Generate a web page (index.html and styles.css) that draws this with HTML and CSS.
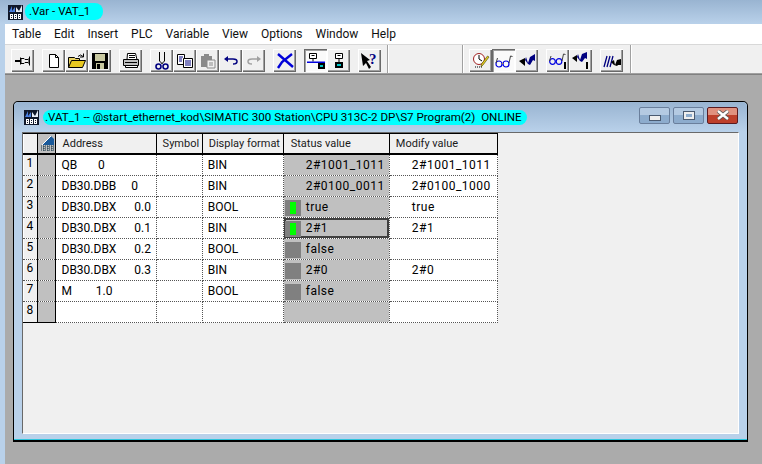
FILE: index.html
```html
<!DOCTYPE html>
<html lang="en">
<head>
    <meta charset="UTF-8" />
    <title>Var - VAT_1</title>
    <link rel="stylesheet" href="styles.css">
</head>
<body>

<svg class="defs" width="0" height="0">
    <symbol id="app-icon" viewBox="0 0 15 15">
        <rect width="15" height="15" fill="#10182a"/>
        <path d="M1 7 L4 1 L4 6 L7 2 L7 7 Z" fill="#4a80e0"/>
        <path d="M8 7 L8 2 L11 6 L14 0 L14 7 Z" fill="#e8eef8"/>
        <path d="M2 9h3v5H2zM6 9h3v5H6zM10 9h3v5h-3z" fill="#fff"/>
        <path d="M3 10h1v1H3zM3 12h1v1H3zM7 10h1v1H7zM7 12h1v1H7zM11 10h1v1h-1zM11 12h1v1h-1z" fill="#10182a"/>
    </symbol>
</svg>

<!-- title -->
<div class="app-title">
    <svg class="app-icon"><use href="#app-icon"/></svg>
    <span class="mark">.Var - VAT_1</span>
</div>

<div class="frame">
    <div class="menu">
        <span>Table</span><span>Edit</span><span>Insert</span><span>PLC</span><span>Variable</span><span>View</span><span>Options</span><span>Window</span><span>Help</span>
    </div>

    <!-- toolbar -->
    <div class="toolbar">
        <div class="tool-group">
            <button class="tool"><svg class="big" viewBox="0 0 18 18"><path d="M1 9h5" stroke="#000" stroke-width="2" fill="none"/><path d="M6.500 5.500v7" stroke="#000"/><path d="M7 6.500h3l1 1h3l1-1v5l-1-1h-3l-1 1H7z" fill="#f0f0f0" stroke="#000"/><path d="M15.500 4.500v9" stroke="#000"/></svg></button>
        </div>
        <div class="tool-group">
            <button class="tool"><svg viewBox="0 0 16 16"><path d="M3.500 1.500h6l3 3v10h-9z" fill="#fff" stroke="#000"/><path d="M9.500 1.500v3h3" fill="none" stroke="#000"/></svg></button>
            <button class="tool"><svg class="big" viewBox="0 0 18 18"><path d="M.5 15.500v-10h6l1 1h4v2" fill="#e8d060" stroke="#000"/><path d="M.5 15.500l3-7h14l-3 7z" fill="#e8c820" stroke="#000"/><path d="M10 4.500q2.500-3 5 0M15.500 1.500v3.500h-3.500" fill="none" stroke="#000"/></svg></button>
            <button class="tool"><svg viewBox="0 0 16 16"><path d="M0 0h16v16H0z" fill="#000"/><path d="M3 1h10v7H3z" fill="#c8c8a0"/><path d="M4 10h8v6H4z" fill="#c8c8a0"/><path d="M5 11h3v5H5z" fill="#000"/></svg></button>
        </div>
        <div class="tool-group">
            <button class="tool"><svg class="big" viewBox="0 0 18 18"><path d="M5.500 1.500h8l1.500 6h-10z" fill="#fff" stroke="#000"/><path d="M1.500 7.500h15v6h-15z" fill="#c0c0c0" stroke="#000"/><path d="M3.500 13.500h12v2h-12z" fill="#fff" stroke="#000"/><path d="M7 3.500h6M7 5.500h6M3 10.500h12" stroke="#000"/></svg></button>
        </div>
        <div class="tool-group">
            <button class="tool"><svg class="big" viewBox="0 0 18 18"><path d="M6.500 0v9l3 3M11.500 0v9l-3 3" fill="none" stroke="#000"/><circle cx="5.500" cy="14.500" r="2.500" fill="none" stroke="#000080" stroke-width="1.600"/><circle cx="12.500" cy="14.500" r="2.500" fill="none" stroke="#000080" stroke-width="1.600"/></svg></button>
            <button class="tool"><svg viewBox="0 0 16 16"><path d="M.5 1.500h7v10h-7z" fill="#fff" stroke="#000"/><path d="M6.500 5.500h9v9h-9z" fill="#fff" stroke="#000"/><path d="M2 4h4M2 6h3M2 8h3M8 8h6M8 10h6M8 12h6" stroke="#000080"/></svg></button>
            <button class="tool"><svg viewBox="0 0 16 16"><path d="M1 3h3V1h5v2h3v11H1z" fill="#8a8a8a"/><path d="M7 7h8v8H7z" fill="#f0f0f0" stroke="#8a8a8a"/><path d="M9 10h4M9 12h4" stroke="#8a8a8a"/></svg></button>
            <button class="tool"><svg viewBox="0 0 16 16"><path d="M1 6l4-3v6z" fill="#000080"/><path d="M4 6h6q4 0 4 2.500t-4 2.500" fill="none" stroke="#000080" stroke-width="1.500"/></svg></button>
            <button class="tool"><svg viewBox="0 0 16 16"><path d="M15 6l-4-3v6z" fill="#a0a0a0"/><path d="M12 6H6q-4 0-4 2.500t4 2.500" fill="none" stroke="#a0a0a0" stroke-width="1.500"/></svg></button>
        </div>
        <div class="tool-group">
            <button class="tool"><svg class="big" viewBox="0 0 18 18"><path d="M2 2l15 13M16 2L6 10l-4 6" fill="none" stroke="#0000d8" stroke-width="2.400"/></svg></button>
        </div>
        <div class="tool-group">
            <button class="tool pressed"><svg class="big" viewBox="0 0 18 18"><path d="M2.500 1.500h7v5h-7z" fill="#fff" stroke="#000"/><path d="M4.500 3.500h3" stroke="#000"/><path d="M6 6.500v3" stroke="#000"/><path d="M0 9.500h18v1.500H0z" fill="#0000e0"/><path d="M11 11h7v6h-7z" fill="#000"/><path d="M13 13h3v2h-3z" fill="#00c8c8"/></svg></button>
            <button class="tool"><svg viewBox="0 0 16 16"><path d="M4.500 .5h7v5h-7z" fill="#fff" stroke="#000"/><path d="M6.500 2.500h3" stroke="#000"/><path d="M8 5.500v4" stroke="#000"/><path d="M4 9h8v6H4z" fill="#000"/><path d="M6 11h4v2H6z" fill="#00c8c8"/></svg></button>
        </div>
        <div class="tool-group">
            <button class="tool"><svg class="big" viewBox="0 0 18 18"><path d="M0 1l9 7-3 1 4 6-2 2-3-6-3 3z" fill="#000"/><text class="tool-q" x="8" y="12">?</text></svg></button>
        </div>
        <div class="tool-sep first"></div>
        <div class="tool-sep second"></div>
        <div class="tool-group after-sep">
            <button class="tool"><svg class="big" viewBox="0 0 18 18"><circle cx="7" cy="7" r="5.500" fill="#fff" stroke="#a02020"/><path d="M7 3v4l3 2" fill="none" stroke="#000"/><path d="M3 15h7" stroke="#000" stroke-dasharray="1 1"/><path d="M17 5l-6 8-2 2 .5-3 6-8z" fill="#e8d020" stroke="#404000" stroke-width=".6"/></svg></button>
            <button class="tool pressed"><svg class="big" viewBox="0 0 18 18"><circle cx="4" cy="12" r="3" fill="none" stroke="#0000e0" stroke-width="1.200"/><circle cx="11" cy="12" r="3" fill="none" stroke="#0000e0" stroke-width="1.200"/><path d="M1 11l1.500-5M14 11l1.500-7 2 .5" fill="none" stroke="#404040"/><path d="M7 11.500h1" stroke="#d0a000"/></svg></button>
            <button class="tool"><svg class="big" viewBox="0 0 18 18"><path d="M1 9l6-3v8z" fill="#000"/><path d="M7 8l1-3 2 6 2-6 5-3v7l-2-1-3 5-2-1z" fill="#000080"/></svg></button>
        </div>
        <div class="tool-group">
            <button class="tool"><svg class="big" viewBox="0 0 18 18"><circle cx="3.500" cy="9.500" r="2.800" fill="none" stroke="#0000e0" stroke-width="1.200"/><circle cx="10" cy="9.500" r="2.800" fill="none" stroke="#0000e0" stroke-width="1.200"/><path d="M.5 9l1.500-5M13 9l1.500-7 2 .5" fill="none" stroke="#404040"/><path d="M15 10h2v7h-2z" fill="#000"/></svg></button>
            <button class="tool"><svg class="big" viewBox="0 0 18 18"><path d="M0 6l5-3v7z" fill="#000"/><path d="M5 5l1-3 2 6 2-6 5-2v7l-2-1-3 4-2-1z" fill="#000080"/><path d="M14 10h2v7h-2z" fill="#000"/></svg></button>
        </div>
        <div class="tool-group">
            <button class="tool"><svg class="big" viewBox="0 0 18 18"><path d="M4 4L1 15M7 4L4 15M10 4L7 15" stroke="#000080" stroke-width="1.300" fill="none"/><path d="M8 10l3-2 1 5 2-5 4-1v6h-3l-1 1-3-1z" fill="#000"/></svg></button>
        </div>
        <div class="tool-sep last"></div>
    </div>

    <!-- mdi -->
    <div class="mdi">
        <div class="child">
            <div class="child-title">
                <svg class="child-icon"><use href="#app-icon"/></svg>
                <span class="mark child-mark">.VAT_1 -- @start_ethernet_kod\SIMATIC 300 Station\CPU 313C-2 DP\S7 Program(2)  ONLINE</span>
                <div class="win-btns">
                    <div class="win-btn"><span class="glyph-min"></span></div>
                    <div class="win-btn"><span class="glyph-max"></span></div>
                    <div class="win-btn close"><svg viewBox="0 0 14 10" width="14" height="10"><path d="M2 1l10 8M12 1L2 9" stroke="#555" stroke-width="4"/><path d="M2 1l10 8M12 1L2 9" stroke="#fff" stroke-width="2.400"/></svg></div>
                </div>
            </div>
            <div class="client">
                <table class="vat">
                    <colgroup>
                        <col class="c-num"><col class="c-ico"><col class="c-addr"><col class="c-sym"><col class="c-fmt"><col class="c-status"><col class="c-mod">
                    </colgroup>
                    <thead>
                    <tr>
                        <th class="num"></th>
                        <th class="ico"><svg viewBox="0 0 16 17" width="16" height="17"><path d="M3 10L12 1l3 3v6z" fill="#1a5a9a"/><path d="M3 10l9-9" stroke="#fff"/><path d="M2 11h14M2 13h14M2 15h14M5 11v5M9 11v5M13 11v5" stroke="#103040" stroke-dasharray="1 1"/></svg></th>
                        <th class="addr">Address</th>
                        <th>Symbol</th>
                        <th>Display format</th>
                        <th class="status">Status value</th>
                        <th>Modify value</th>
                    </tr>
                    </thead>
                    <tbody>
                    <tr><td class="num">1</td><td class="ico"></td><td class="addr">QB       0</td><td></td><td>BIN</td><td class="status"><div class="val-row plain">2#1001_1011</div></td><td class="mod">2#1001_1011</td></tr>
                    <tr><td class="num">2</td><td class="ico"></td><td class="addr">DB30.DBB     0</td><td></td><td>BIN</td><td class="status"><div class="val-row plain">2#0100_0011</div></td><td class="mod">2#0100_1000</td></tr>
                    <tr><td class="num">3</td><td class="ico"></td><td class="addr">DB30.DBX      0.0</td><td></td><td>BOOL</td><td class="status"><div class="val-row"><span class="led on"></span>true</div></td><td class="mod">true</td></tr>
                    <tr><td class="num">4</td><td class="ico"></td><td class="addr">DB30.DBX      0.1</td><td></td><td>BIN</td><td class="status focus"><div class="val-row"><span class="led on"></span>2#1</div></td><td class="mod">2#1</td></tr>
                    <tr><td class="num">5</td><td class="ico"></td><td class="addr">DB30.DBX      0.2</td><td></td><td>BOOL</td><td class="status"><div class="val-row"><span class="led"></span>false</div></td><td class="mod"></td></tr>
                    <tr><td class="num">6</td><td class="ico"></td><td class="addr">DB30.DBX      0.3</td><td></td><td>BIN</td><td class="status"><div class="val-row"><span class="led"></span>2#0</div></td><td class="mod">2#0</td></tr>
                    <tr><td class="num">7</td><td class="ico"></td><td class="addr">M        1.0</td><td></td><td>BOOL</td><td class="status"><div class="val-row"><span class="led"></span>false</div></td><td class="mod"></td></tr>
                    <tr><td class="num">8</td><td class="ico"></td><td class="addr"></td><td></td><td></td><td class="status"></td><td class="mod"></td></tr>
                    </tbody>
                </table>
            </div>
        </div>
    </div>
</div>

</body>
</html>
```

FILE: styles.css
```css
html, body {
    height: 100%;
}

body {
    margin: 0;
    overflow: hidden;
    display: flex;
    flex-direction: column;
    font-family: Roboto, 'Liberation Sans', sans-serif;
    font-size: 12px;
    font-variant-ligatures: none;
    color: #000;
    background: #b9d1ea;
}

.defs {
    position: absolute;
}

.mark {
    background: #00ffff;
    border-radius: 8px;
    white-space: pre;
}

/* main window */
.app-title {
    height: 24px;
    flex: none;
    display: flex;
    align-items: center;
    padding-left: 8px;
    box-sizing: border-box;
    background: linear-gradient(#99b4d1, #b9d1ea);
}

.app-icon {
    width: 15px;
    height: 15px;
    margin-right: 2px;
}

.app-title .mark {
    padding: 0 13px 0 4px;
    line-height: 17px;
    margin-top: -1px;
    font-size: 11.5px;
}

.frame {
    flex: 1;
    min-height: 0;
    margin-left: 5px;
    display: flex;
    flex-direction: column;
}

.menu {
    height: 20px;
    flex: none;
    display: flex;
    align-items: center;
    padding-left: 7px;
    gap: 13px;
    background: #fff;
    color: #101010;
}

/* toolbar */
.toolbar {
    height: 30px;
    flex: none;
    box-sizing: border-box;
    display: flex;
    padding: 4px 0 0 6px;
    gap: 8px;
    background: #f0f0f0;
    border-top: 1px solid #d8d8d8;
    border-bottom: 1px solid #a0a0a0;
}

.tool-group {
    display: flex;
    height: 23px;
}

.tool {
    width: 23px;
    height: 23px;
    padding: 0;
    border: 0;
    display: flex;
    align-items: center;
    justify-content: center;
    background: #f0f0f0;
    box-shadow: inset 1px 1px 0 #fff, inset -1px -1px 0 #696969, inset -2px -2px 0 #a0a0a0;
}

.tool.pressed {
    background: #fafafa;
    box-shadow: inset 1px 1px 0 #696969, inset 2px 2px 0 #a0a0a0, inset -1px -1px 0 #fff;
}

.tool svg {
    width: 16px;
    height: 16px;
}

.tool svg.big {
    width: 18px;
    height: 18px;
}

.tool-q {
    font-family: 'Liberation Serif', serif;
    font-weight: bold;
    font-size: 15px;
    fill: #000080;
}

.tool-sep {
    width: 1px;
    height: 28px;
    margin-top: -4px;
    background: #a0a0a0;
    border-right: 1px solid #fff;
}

.tool-sep.first {
    margin-left: -2px;
}

.tool-sep.second {
    margin-left: 65px;
}

.tool-group.after-sep {
    margin-left: -3px;
}

.tool-sep.last {
    margin-left: -1px;
}

/* mdi area */
.mdi {
    flex: 1;
    min-height: 0;
    padding: 26px 14px 0 8px;
    background: #ababab;
    border-top: 1px solid #808080;
}

.child {
    height: 341px;
    box-sizing: border-box;
    display: flex;
    flex-direction: column;
    border: 1px solid #000;
    border-bottom-width: 2px;
    border-radius: 5px 5px 0 0;
    padding: 0 8px 6px;
    background: #b9d1ea;
    box-shadow: inset 0 -1px 0 #2ec4dc;
}

.child-title {
    height: 30px;
    flex: none;
    margin: 0 -8px;
    padding: 0 9px 0 10px;
    display: flex;
    align-items: center;
    border-radius: 5px 5px 0 0;
    background: linear-gradient(#99b4d1, #b9d1ea);
}

.child-icon {
    width: 15px;
    height: 15px;
    flex: none;
}

.child-mark {
    margin-left: 4px;
    padding: 0 5px 0 2px;
    line-height: 15px;
    font-size: 11.6px;
}

.win-btns {
    margin-left: auto;
    display: flex;
    gap: 3px;
    margin-top: -4px;
}

.win-btn {
    width: 31px;
    height: 17px;
    box-sizing: border-box;
    display: flex;
    align-items: center;
    justify-content: center;
    border: 1px solid #6a7f9c;
    border-radius: 2px;
    background: linear-gradient(#b4cae2 50%, #8daccd 50%);
}

.win-btn.close {
    border-color: #5a1a20;
    background: linear-gradient(#e0917f 50%, #bd3f2b 50%);
}

.glyph-min {
    width: 10px;
    height: 4px;
    margin-top: 5px;
    border: 1px solid #4a5a70;
    background: #eee;
}

.glyph-max {
    width: 6px;
    height: 3px;
    border: 2px solid #eee;
    outline: 1px solid #4a5a70;
    background: #8daccd;
}

.client {
    flex: 1;
    min-height: 0;
    background: #f0f0f0;
    border-top: 1px solid #696969;
    border-left: 1px solid #696969;
    border-right: 1px solid #fff;
    border-bottom: 1px solid #fff;
}

/* table */
.vat {
    table-layout: fixed;
    border-collapse: collapse;
    width: 475px;
    background: #fff;
}

.c-num { width: 14px; }
.c-ico { width: 18px; }
.c-addr { width: 101px; }
.c-sym { width: 46px; }
.c-fmt { width: 81px; }
.c-status { width: 106px; }
.c-mod { width: 108px; }

.vat th, .vat td {
    height: 21px;
    box-sizing: border-box;
    padding: 1px 0 0 5px;
    font-weight: normal;
    text-align: left;
    white-space: pre;
    overflow: hidden;
}

.vat th {
    height: 20px;
    background: #f0f0f0;
    border: 1px solid #000;
    border-width: 1px 1px 2px 1px;
    padding-left: 6px;
    font-size: 11px;
    color: #1a1a1a;
}

.vat td {
    border-right: 1px dotted #555;
    border-bottom: 1px dotted #555;
}

.vat .num {
    padding: 0 0 3px;
    text-align: center;
    background: #f0f0f0;
    border-left: 0;
    border-right: 1px solid #000;
    box-shadow: inset 1px 0 0 #fff;
}

.vat th.num {
    border-left: 0;
}

.vat tbody .num {
    border-bottom: 1px dotted #555;
}

.vat .ico {
    padding: 0;
    background: #c0c0c0;
    border-right: 1px solid #000;
}

.vat th.ico svg {
    display: block;
    margin: 1px 0 0 1px;
}

.vat .addr {
    padding-left: 6px;
}

.vat th.addr, .vat th.status {
    padding-left: 7px;
    background: #f0f0f0;
}

.vat tbody tr:last-child td {
    border-bottom: 1px dotted #555;
}

.vat tbody tr:last-child .num,
.vat tbody tr:last-child .ico {
    border-bottom: 1px solid #000;
}

.vat .status {
    padding: 0;
    background: #c0c0c0;
}

.vat .mod {
    padding-left: 22px;
    letter-spacing: 0.5px;
}

.val-row {
    display: flex;
    align-items: center;
    height: 20px;
    padding-left: 1px;
    letter-spacing: 0.5px;
}

.val-row.plain {
    padding-left: 22px;
}

.led {
    width: 16px;
    height: 16px;
    margin: 3px 5px 0 0;
    background: #808080;
    position: relative;
}

.led.on::after {
    content: "";
    position: absolute;
    left: 5px;
    top: 2px;
    width: 6px;
    height: 12px;
    background: #00ff00;
}

.vat .focus {
    box-shadow: inset 0 0 0 2px #404040;
}
```
